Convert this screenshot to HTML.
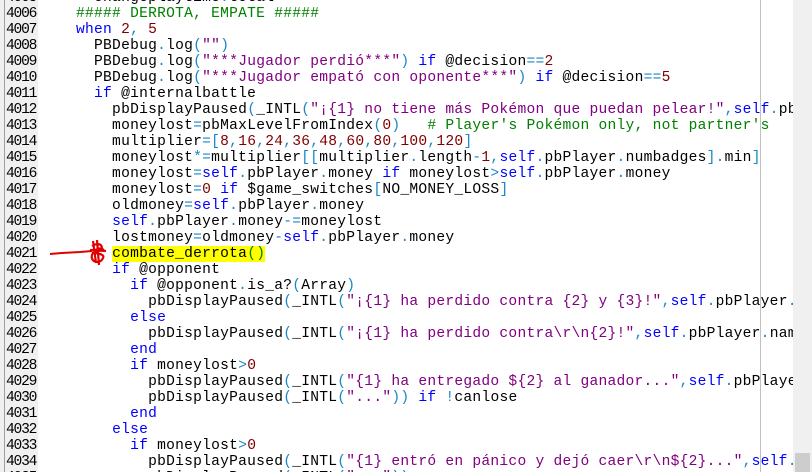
<!DOCTYPE html>
<html><head><meta charset="utf-8"><style>
html,body{margin:0;padding:0;width:812px;height:472px;overflow:hidden;background:#fff;}
#wrap{position:relative;width:812px;height:472px;overflow:hidden;}
#gut{position:absolute;left:0;top:0;width:38px;height:472px;background:#f0f0f0;}
#gline{position:absolute;left:4px;top:0;width:1px;height:472px;background:#a0a0a0;}
pre{margin:0;font-family:"Liberation Mono",monospace;font-size:14.6px;line-height:16px;position:absolute;white-space:pre;}
#nums{left:6px;top:-10px;color:#000;letter-spacing:-1.2px;}
#code{left:40px;top:-10px;color:#000;letter-spacing:0.25px;}
.k{color:#0000ff}.s{color:#800080}.c{color:#008000}.n{color:#800000}.o{color:#1a86c8}
.hl{background:#ffff00}
#edge{position:absolute;left:760px;top:0;width:1px;height:472px;background:#c0c0c0;}
#sb{position:absolute;left:793px;top:0;width:19px;height:472px;background:#f0f0f0;}
#th{position:absolute;left:795px;top:453px;width:15px;height:19px;background:#cdcdcd;}
</style></head><body><div id="wrap">
<div id="gut"></div><div id="gline"></div>
<pre id="nums">4005
4006
4007
4008
4009
4010
4011
4012
4013
4014
4015
4016
4017
4018
4019
4020
4021
4022
4023
4024
4025
4026
4027
4028
4029
4030
4031
4032
4033
4034
4035</pre>
<pre id="code">      changeplaytime<span class="o">.</span>total
    <span class="c">##### DERROTA, EMPATE #####</span>
    <span class="k">when</span> <span class="n">2</span><span class="o">,</span> <span class="n">5</span>
      PBDebug<span class="o">.</span>log<span class="o">(</span><span class="s">""</span><span class="o">)</span>
      PBDebug<span class="o">.</span>log<span class="o">(</span><span class="s">"***Jugador perdió***"</span><span class="o">)</span> <span class="k">if</span> @decision<span class="o">==</span><span class="n">2</span>
      PBDebug<span class="o">.</span>log<span class="o">(</span><span class="s">"***Jugador empató con oponente***"</span><span class="o">)</span> <span class="k">if</span> @decision<span class="o">==</span><span class="n">5</span>
      <span class="k">if</span> @internalbattle
        pbDisplayPaused<span class="o">(</span>_INTL<span class="o">(</span><span class="s">"¡{1} no tiene más Pokémon que puedan pelear!"</span><span class="o">,</span><span class="k">self</span><span class="o">.</span>pbPlayer<span class="o">.</span>name<span class="o">))</span>
        moneylost<span class="o">=</span>pbMaxLevelFromIndex<span class="o">(</span><span class="n">0</span><span class="o">)</span>   <span class="c"># Player's Pokémon only, not partner's</span>
        multiplier<span class="o">=[</span><span class="n">8</span><span class="o">,</span><span class="n">16</span><span class="o">,</span><span class="n">24</span><span class="o">,</span><span class="n">36</span><span class="o">,</span><span class="n">48</span><span class="o">,</span><span class="n">60</span><span class="o">,</span><span class="n">80</span><span class="o">,</span><span class="n">100</span><span class="o">,</span><span class="n">120</span><span class="o">]</span>
        moneylost<span class="o">*=</span>multiplier<span class="o">[[</span>multiplier<span class="o">.</span>length<span class="o">-</span><span class="n">1</span><span class="o">,</span><span class="k">self</span><span class="o">.</span>pbPlayer<span class="o">.</span>numbadges<span class="o">].</span>min<span class="o">]</span>
        moneylost<span class="o">=</span><span class="k">self</span><span class="o">.</span>pbPlayer<span class="o">.</span>money <span class="k">if</span> moneylost<span class="o">&gt;</span><span class="k">self</span><span class="o">.</span>pbPlayer<span class="o">.</span>money
        moneylost<span class="o">=</span><span class="n">0</span> <span class="k">if</span> $game_switches<span class="o">[</span>NO_MONEY_LOSS<span class="o">]</span>
        oldmoney<span class="o">=</span><span class="k">self</span><span class="o">.</span>pbPlayer<span class="o">.</span>money
        <span class="k">self</span><span class="o">.</span>pbPlayer<span class="o">.</span>money<span class="o">-=</span>moneylost
        lostmoney<span class="o">=</span>oldmoney<span class="o">-</span><span class="k">self</span><span class="o">.</span>pbPlayer<span class="o">.</span>money
        <span class="hl">combate_derrota<span class="o" style="color:#008000">()</span></span>
        <span class="k">if</span> @opponent
          <span class="k">if</span> @opponent<span class="o">.</span>is_a?<span class="o">(</span>Array<span class="o">)</span>
            pbDisplayPaused<span class="o">(</span>_INTL<span class="o">(</span><span class="s">"¡{1} ha perdido contra {2} y {3}!"</span><span class="o">,</span><span class="k">self</span><span class="o">.</span>pbPlayer<span class="o">.</span>name<span class="o">,</span>
          <span class="k">else</span>
            pbDisplayPaused<span class="o">(</span>_INTL<span class="o">(</span><span class="s">"¡{1} ha perdido contra\r\n{2}!"</span><span class="o">,</span><span class="k">self</span><span class="o">.</span>pbPlayer<span class="o">.</span>name<span class="o">,</span>
          <span class="k">end</span>
          <span class="k">if</span> moneylost<span class="o">&gt;</span><span class="n">0</span>
            pbDisplayPaused<span class="o">(</span>_INTL<span class="o">(</span><span class="s">"{1} ha entregado ${2} al ganador..."</span><span class="o">,</span><span class="k">self</span><span class="o">.</span>pbPlayer<span class="o">.</span>name
            pbDisplayPaused<span class="o">(</span>_INTL<span class="o">(</span><span class="s">"..."</span><span class="o">))</span> <span class="k">if</span> <span class="o">!</span>canlose
          <span class="k">end</span>
        <span class="k">else</span>
          <span class="k">if</span> moneylost<span class="o">&gt;</span><span class="n">0</span>
            pbDisplayPaused<span class="o">(</span>_INTL<span class="o">(</span><span class="s">"{1} entró en pánico y dejó caer\r\n${2}..."</span><span class="o">,</span><span class="k">self</span><span class="o">.</span>pbPlayer<span class="o">.</span>name
            pbDisplayPaused<span class="o">(</span>_INTL<span class="o">(</span><span class="s">"..."</span><span class="o">))</span></pre>
<svg style="position:absolute;left:0;top:0" width="812" height="472">
<path d="M50 254 L62 253 L80 252 L92 251" stroke="#e00000" stroke-width="2" fill="none"/>
<path d="M93 241 L96 263 M92 246 C102 240 106 250 96 252 C88 254 106 252 103 258 C100 265 90 262 92 255 C94 248 104 246 104 252 M90 250 L106 251 M97 240 L99 265" stroke="#e00000" stroke-width="2.2" fill="none"/>
</svg>
<div id="edge"></div>
<div id="sb"></div><div id="th"></div>
</div></body></html>
